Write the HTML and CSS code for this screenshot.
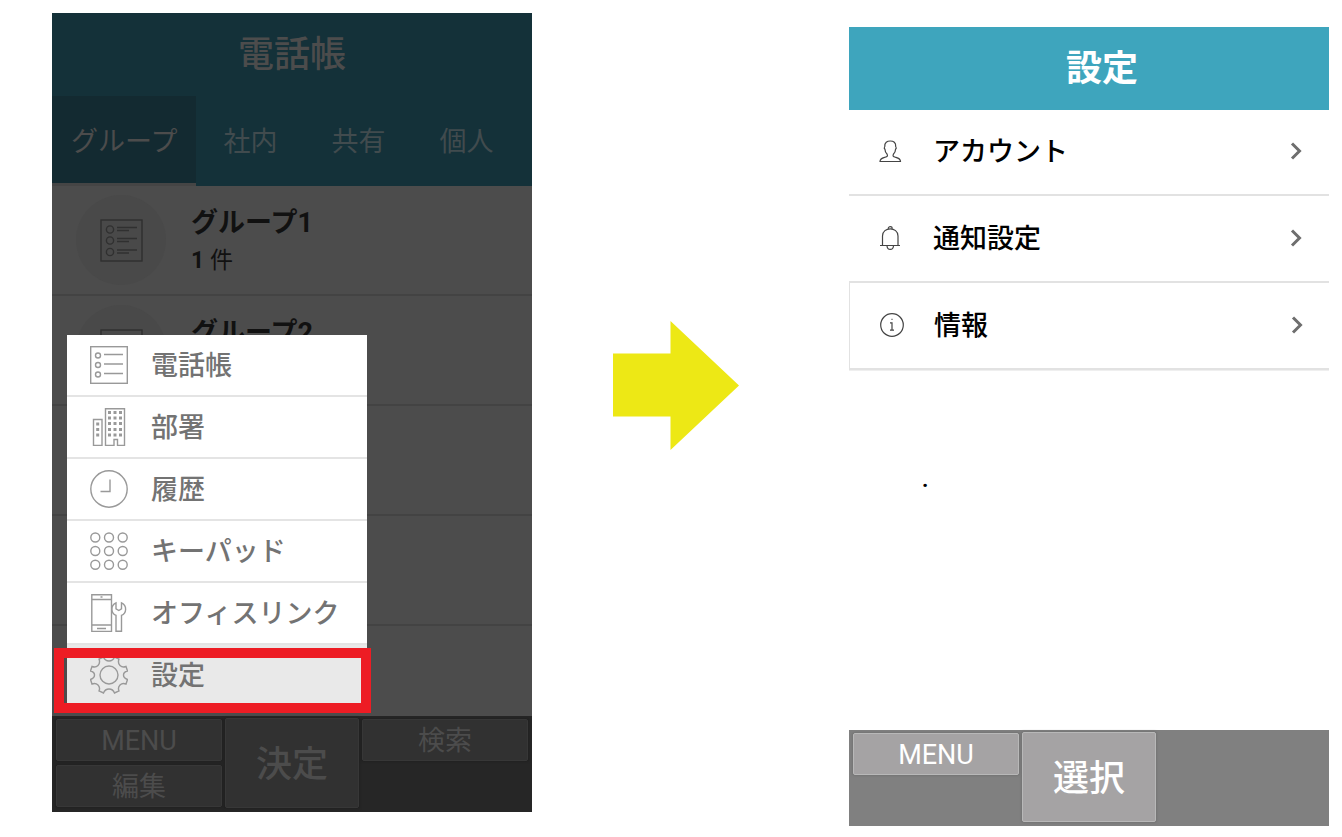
FILE: index.html
```html
<!DOCTYPE html>
<html lang="ja">
<head>
    <meta charset="UTF-8">
    <meta name="viewport" content="width=device-width, initial-scale=1.0">
    <title>設定</title>
    <link rel="stylesheet" href="styles.css">
</head>
<body>

    <!-- Shared icons -->
    <svg class="sprite" aria-hidden="true">
        <symbol id="icon-list" viewBox="0 0 43 43">
            <rect x="1" y="1" width="41" height="41"/>
            <circle cx="10" cy="10.500" r="3.600"/>
            <circle cx="10" cy="21.500" r="3.600"/>
            <circle cx="10" cy="33" r="3.600"/>
            <path d="M17 8.500h20M17 11.500h12M17 19.500h20M17 22.500h12M17 31h20M17 34h12"/>
        </symbol>
        <symbol id="icon-chevron" viewBox="0 0 12 18">
            <path d="M2 1.500l7.500 7.500L2 16.500"/>
        </symbol>
    </svg>

    <main class="stage">

        <!-- Phone book with the menu open -->
        <section class="phone phone-dim">
            <header class="title-bar">
                <h1>電話帳</h1>
            </header>
            <nav class="tabs">
                <button type="button" class="tab active">グループ</button>
                <button type="button" class="tab">社内</button>
                <button type="button" class="tab">共有</button>
                <button type="button" class="tab">個人</button>
            </nav>
            <ul class="groups">
                <li class="group">
                    <span class="avatar"><svg><use href="#icon-list"/></svg></span>
                    <div>
                        <h2>グループ1</h2>
                        <p><b>1</b> 件</p>
                    </div>
                </li>
                <li class="group">
                    <span class="avatar"><svg><use href="#icon-list"/></svg></span>
                    <div>
                        <h2>グループ2</h2>
                        <p>&nbsp;</p>
                    </div>
                </li>
                <li class="group"></li>
                <li class="group"></li>
                <li class="group"></li>
            </ul>

            <nav class="menu">
                <a href="#phonebook">
                    <svg viewBox="0 0 38 38">
                        <rect x="0.700" y="0.700" width="36.600" height="36.600"/>
                        <circle cx="8" cy="9.500" r="2.500"/><circle cx="8" cy="19" r="2.500"/><circle cx="8" cy="28.500" r="2.500"/>
                        <path d="M14 8.500h19M14 18h19M14 27.500h19"/>
                    </svg>
                    <span>電話帳</span>
                </a>
                <a href="#department">
                    <svg viewBox="0 0 38 38">
                        <path d="M15.500 37.500V.800H34.500v36.700h-7v-6h-3.500v6zM3.500 37.500V11.500h8.500v26z"/>
                        <path class="windows" d="M18 4.500h3M23.500 4.500h3M29 4.500h3M18 10h3M23.500 10h3M29 10h3M18 15.500h3M23.500 15.500h3M29 15.500h3M18 21.500h3M23.500 21.500h3M29 21.500h3M18 27h3M23.500 27h3M29 27h3M6.200 16h3M6.200 21.500h3M6.200 27h3"/>
                    </svg>
                    <span>部署</span>
                </a>
                <a href="#history">
                    <svg viewBox="0 0 38 38">
                        <circle cx="19" cy="19" r="18.200"/>
                        <path d="M20 9.500v12h-9.500"/>
                    </svg>
                    <span>履歴</span>
                </a>
                <a href="#keypad">
                    <svg viewBox="0 0 38 38">
                        <circle cx="5.300" cy="5.500" r="4.500"/><circle cx="19" cy="5.500" r="4.500"/><circle cx="32.700" cy="5.500" r="4.500"/>
                        <circle cx="5.300" cy="19" r="4.500"/><circle cx="19" cy="19" r="4.500"/><circle cx="32.700" cy="19" r="4.500"/>
                        <circle cx="5.300" cy="32.700" r="4.500"/><circle cx="19" cy="32.700" r="4.500"/><circle cx="32.700" cy="32.700" r="4.500"/>
                    </svg>
                    <span>キーパッド</span>
                </a>
                <a href="#officelink">
                    <svg viewBox="0 0 38 38">
                        <path d="M1.800.800h19.700v36.700H1.800zM1.800 5.500h19.700M1.800 31h19.700M7 34.500h9M10.500 3h2"/>
                        <path d="M26 8.800c-6 3-5 10.500 0 12.500v16h5.500v-16c5-2 6-9.500 0-12.500v6l-2.700 1.700-2.800-1.700z"/>
                    </svg>
                    <span>オフィスリンク</span>
                </a>
                <a href="#settings" class="selected">
                    <svg viewBox="0 0 38 38">
                        <circle cx="19" cy="19" r="9"/>
                        <path d="M13.500 1q1.500 4 5.500 4t5.500-4l4.500 2q-1.500 4 1 6.500t6 1l1.500 4.500q-4 1-4 4t4 4.500L36 28q-3.500-1.500-6 1t-1 6l-4.500 2q-1.500-4-5.500-4t-5.500 4L9 35q1.500-3.500-1-6t-6-1L.500 23.500q4-1.500 4-4.500t-4-4L2 10.500q3.500 1.500 6-1T9 3z"/>
                    </svg>
                    <span>設定</span>
                </a>
            </nav>

            <footer class="softkeys">
                <button type="button" class="key">MENU</button>
                <button type="button" class="key key-main">決定</button>
                <button type="button" class="key">検索</button>
                <button type="button" class="key">編集</button>
            </footer>
        </section>

        <svg class="arrow" viewBox="0 0 126 129" aria-hidden="true">
            <path d="M0 32.500h57.500V0L126 64.500 57.500 129V95.500H0z"/>
        </svg>

        <!-- Settings screen -->
        <section class="phone phone-settings">
            <header class="title-bar">
                <h1>設定</h1>
            </header>
            <nav class="settings">
                <a href="#account">
                    <svg class="icon" viewBox="0 0 24 24">
                        <path d="M1 22.500h20.500c0-3-2.500-3.500-5-4.200-2.500-.8-3-1.300-2-3.300 1.500-1.500 2-3 2-4.500 1-1 1-2 .2-3C17 3.500 14.500 2 11.300 2S5.500 3.500 5.800 7.500c-.8 1-.8 2 .2 3 0 1.500.5 3 2 4.500 1 2 .5 2.500-2 3.300-2.500.7-5 1.200-5 4.200z"/>
                    </svg>
                    <span>アカウント</span>
                    <svg class="chevron"><use href="#icon-chevron"/></svg>
                </a>
                <a href="#notice">
                    <svg class="icon" viewBox="0 0 24 24">
                        <path d="M1 19.500h20M3.500 19.500V10c0-9.500 15.500-9.500 15.500 0v9.500M9.300 2.500c0-2.500 3.900-2.500 3.900 0M8 20c.5 4.500 6 4.500 6.500 0"/>
                    </svg>
                    <span>通知設定</span>
                    <svg class="chevron"><use href="#icon-chevron"/></svg>
                </a>
                <a href="#info" class="last">
                    <svg class="icon" viewBox="0 0 24 24">
                        <circle cx="12" cy="12" r="11.300"/>
                        <path d="M10 9.800h2V17M10 17.200h4M11.500 6.300h1"/>
                    </svg>
                    <span>情報</span>
                    <svg class="chevron"><use href="#icon-chevron"/></svg>
                </a>
            </nav>
            <p class="note">.</p>
            <footer class="softkeys">
                <button type="button" class="key">MENU</button>
                <button type="button" class="key key-main">選択</button>
            </footer>
        </section>

    </main>

</body>
</html>
```
FILE: styles.css
```css
* {
    box-sizing: border-box;
}

body {
    margin: 0;
    background-color: #fff;
    font-family: Roboto, "Noto Sans CJK JP", sans-serif;
}

h1, h2, p, ul {
    margin: 0;
    padding: 0;
}

a {
    text-decoration: none;
}

button {
    margin: 0;
    padding: 0;
    border: none;
    background: none;
    font-family: inherit;
    cursor: pointer;
}

svg {
    flex: none;
    fill: none;
}

.sprite {
    position: absolute;
    width: 0;
    height: 0;
}

.stage {
    display: grid;
    grid-template-columns: 480fr 317fr 480fr;
    align-items: start;
    padding: 13px 13px 0 52px;
}

.phone {
    display: flex;
    flex-direction: column;
    min-height: 799px;
}

.title-bar {
    display: flex;
    align-items: center;
    justify-content: center;
    height: 83px;
}

.title-bar h1 {
    font-size: 36px;
    line-height: 48px;
}

/* Dimmed phone */
.phone-dim {
    position: relative;
    background-color: #4c4c4c;
}

.phone-dim .title-bar {
    background-color: #143139;
    color: #4c4c4c;
}

.phone-dim h1 {
    font-weight: 500;
}

.tabs {
    display: flex;
    height: 90px;
    background-color: #143139;
}

.tab {
    padding: 0 27px 3px;
    color: #414b4e;
    font-size: 27px;
}

.tab.active {
    padding: 0 19px;
    border-bottom: 3px solid #454545;
    background-color: #132a31;
    color: #4c4c4c;
}

.groups {
    flex: 1;
    max-height: 530px;
    overflow: hidden;
    list-style: none;
}

.group {
    display: flex;
    align-items: center;
    gap: 25px;
    height: 110px;
    padding-left: 24px;
    border-bottom: 2px solid #434343;
    color: #111;
}

.group div {
    padding-top: 3px;
}

.group h2 {
    font-size: 27px;
    font-weight: 700;
    line-height: 38px;
}

.group p {
    font-size: 23px;
    line-height: 38px;
}

.avatar {
    display: flex;
    align-items: center;
    justify-content: center;
    width: 90px;
    height: 90px;
    border-radius: 50%;
    background-color: #494949;
}

.avatar svg {
    width: 43px;
    height: 43px;
    stroke: #303030;
    stroke-width: 1.4;
}

/* Popup menu */
.menu {
    position: absolute;
    left: 15px;
    bottom: 105px;
    width: 300px;
    background-color: #fff;
}

.menu a {
    display: flex;
    align-items: center;
    gap: 23px;
    height: 62px;
    padding-left: 23px;
    border-bottom: 2px solid #e4e4e4;
    color: #737373;
    font-size: 27px;
    font-weight: 500;
}

.menu span {
    padding-bottom: 3px;
}

.menu svg {
    width: 38px;
    height: 38px;
    stroke: #999;
    stroke-width: 1.4;
}

.menu .windows {
    stroke-width: 3;
}

.menu .selected {
    position: relative;
    background-color: #e9e9e9;
}

.menu .selected::after {
    content: "";
    position: absolute;
    top: 3px;
    right: -4px;
    bottom: -8px;
    left: -13px;
    border: 10px solid #ed1c24;
}

/* Soft keys */
.softkeys {
    display: grid;
    grid-template-columns: 166fr 134fr 166fr;
    grid-template-rows: 44px 44px;
    gap: 2px 3px;
    height: 96px;
    padding: 2px 4px;
    background-color: #808080;
}

.key {
    margin: 1px 0;
    padding-top: 2px;
    border: 1px solid #b8b8b8;
    border-radius: 2px;
    background-color: #a5a3a4;
    box-shadow: 0 0 2px 1px #747474;
    color: #fff;
    font-size: 27px;
    line-height: 38px;
}

.key-main {
    grid-row: span 2;
    margin: 0;
    padding-top: 4px;
    font-size: 36px;
    font-weight: 500;
}

.phone-dim .softkeys {
    background-color: #262626;
}

.phone-dim .key {
    border-color: #373737;
    background-color: #313131;
    box-shadow: 0 0 2px 1px #212121;
    color: #4c4c4c;
}

.arrow {
    width: 126px;
    margin: 308px 0 0 81px;
    fill: #ede815;
}

/* Settings phone */
.phone-settings {
    margin-top: 14px;
}

.phone-settings .title-bar {
    padding-left: 26px;
    background-color: #3ea5bd;
    color: #fff;
}

.settings a {
    display: flex;
    align-items: center;
    gap: 30px;
    height: 86px;
    padding: 0 27px 2px 30px;
    border-bottom: 2px solid #e2e2e2;
    color: #000;
    font-size: 27px;
    font-weight: 500;
}

.settings a + a {
    height: 87px;
}

.settings .last {
    padding-right: 26px;
    border-left: 1px solid #e2e2e2;
    box-shadow: 0 1px 0 #efefef;
}

.settings span {
    flex: 1;
    padding-bottom: 3px;
}

.icon {
    width: 24px;
    height: 24px;
    stroke: #444;
    stroke-width: 1.2;
}

.chevron {
    width: 12px;
    height: 18px;
    stroke: #6e6e6e;
    stroke-width: 3;
}

.note {
    flex: 1;
    padding: 96px 0 0 73px;
    font-size: 22px;
    font-weight: 700;
    line-height: 28px;
}
```
